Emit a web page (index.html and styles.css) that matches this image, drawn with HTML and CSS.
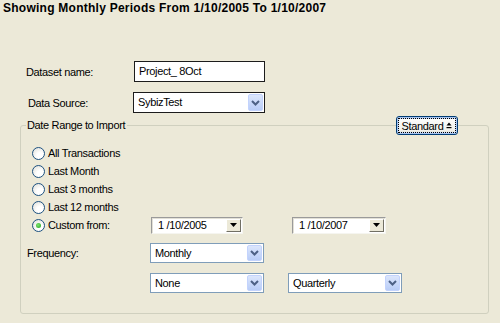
FILE: index.html
```html
<!DOCTYPE html>
<html>
<head>
<meta charset="utf-8">
<link rel="stylesheet" href="styles.css">
</head>
<body>
<div class="title">Showing Monthly Periods From 1/10/2005 To 1/10/2007</div>

<div class="row row-name">
  <span class="lbl lbl-name">Dataset name:</span>
  <div class="textbox">Project_ 8Oct</div>
</div>
<div class="row row-source">
  <span class="lbl lbl-source">Data Source:</span>
  <div class="combo combo-dark combo-source"><span class="combo-text">SybizTest</span><span class="xp-btn"><svg width="9" height="6" viewBox="0 0 9 6"><path d="M1 1 L4.5 4.5 L8 1" fill="none" stroke="#4d6185" stroke-width="2"/></svg></span></div>
</div>

<div class="group">
  <span class="group-label">Date Range to Import</span>
  <button class="std-btn"><span class="focus">Standard<svg width="6" height="7" viewBox="0 0 6 7"><path d="M3 0.5 L5.5 3.5 L0.5 3.5 Z" fill="#000"/><rect x="0.5" y="5" width="5" height="1.2" fill="#000"/></svg></span></button>

  <div class="radio-row"><span class="radio"></span><span class="rtext">All Transactions</span></div>
  <div class="radio-row"><span class="radio"></span><span class="rtext">Last Month</span></div>
  <div class="radio-row"><span class="radio"></span><span class="rtext">Last 3 months</span></div>
  <div class="radio-row"><span class="radio"></span><span class="rtext">Last 12 months</span></div>
  <div class="radio-row custom-row">
    <div class="custom-lead"><span class="radio checked"></span><span class="rtext">Custom from:</span></div>
    <div class="datepick date-from"><span class="date-text">1 /10/2005</span><span class="cls-btn"><svg width="7" height="4" viewBox="0 0 7 4"><path d="M0 0 L7 0 L3.5 4 Z" fill="#000"/></svg></span></div>
    <div class="datepick date-to"><span class="date-text">1 /10/2007</span><span class="cls-btn"><svg width="7" height="4" viewBox="0 0 7 4"><path d="M0 0 L7 0 L3.5 4 Z" fill="#000"/></svg></span></div>
  </div>

  <div class="freq-row">
    <span class="lbl lbl-freq">Frequency:</span>
    <div class="combo"><span class="combo-text">Monthly</span><span class="xp-btn"><svg width="9" height="6" viewBox="0 0 9 6"><path d="M1 1 L4.5 4.5 L8 1" fill="none" stroke="#4d6185" stroke-width="2"/></svg></span></div>
  </div>
  <div class="freq-row second">
    <div class="combo"><span class="combo-text">None</span><span class="xp-btn"><svg width="9" height="6" viewBox="0 0 9 6"><path d="M1 1 L4.5 4.5 L8 1" fill="none" stroke="#4d6185" stroke-width="2"/></svg></span></div>
    <div class="combo combo-q"><span class="combo-text">Quarterly</span><span class="xp-btn"><svg width="9" height="6" viewBox="0 0 9 6"><path d="M1 1 L4.5 4.5 L8 1" fill="none" stroke="#4d6185" stroke-width="2"/></svg></span></div>
  </div>
</div>
</body>
</html>
```

FILE: styles.css
```css
html, body {
  margin: 0;
  padding: 0;
}
body {
  background: #ece9d8;
  width: 500px;
  height: 323px;
  overflow: hidden;
  font-family: "Liberation Sans", Arial, sans-serif;
  font-size: 11px;
  letter-spacing: -0.35px;
  color: #000;
}
.title {
  font-weight: bold;
  font-size: 12px;
  letter-spacing: 0.25px;
  line-height: 13px;
  padding: 2px 0 0 3px;
  height: 13px;
}
.row {
  display: flex;
  align-items: center;
}
.row-name {
  margin-top: 46px;
  height: 21px;
}
.row-source {
  margin-top: 10px;
  height: 21px;
}
.lbl-name {
  margin-left: 26px;
  width: 108px;
}
.lbl-source {
  margin-left: 28px;
  width: 105px;
}
.textbox {
  box-sizing: border-box;
  width: 131px;
  height: 21px;
  border: 1px solid #1c1c1c;
  background: #fff;
  padding-left: 4px;
  line-height: 19px;
}
.combo {
  box-sizing: border-box;
  width: 114px;
  height: 20px;
  border: 1px solid #7f9db9;
  background: #fff;
  display: flex;
  align-items: stretch;
  padding: 1px;
}
.combo-dark {
  border-color: #1c1c1c;
}
.combo-source {
  width: 132px;
  height: 21px;
}
.combo-text {
  flex: 1;
  padding-left: 3px;
  line-height: 16px;
}
.combo-source .combo-text {
  line-height: 17px;
}
.xp-btn {
  width: 15px;
  border-radius: 2px;
  background: linear-gradient(#dce6fc, #b9cdf7);
  border: 1px solid #c3d3fd;
  box-sizing: border-box;
  display: flex;
  align-items: center;
  justify-content: center;
}
.group {
  position: relative;
  box-sizing: border-box;
  margin: 12px 0 0 20px;
  width: 469px;
  height: 189px;
  border: 1px solid #d0d0bf;
  border-radius: 3px;
  padding-top: 18px;
}
.group-label {
  position: absolute;
  top: -8px;
  left: 5px;
  background: #ece9d8;
  padding: 0 2px 0 1px;
  line-height: 14px;
}
.std-btn {
  position: absolute;
  top: -10px;
  left: 375px;
  box-sizing: border-box;
  width: 62px;
  height: 19px;
  padding: 1px;
  border: 1px solid #003c74;
  border-radius: 3px;
  background: linear-gradient(#ffffff, #f0f0ea 80%, #d6d0c5);
  box-shadow: inset 0 0 0 1px #a8c4f0, inset 0 0 0 2px #cee0fb;
  font: inherit;
  letter-spacing: inherit;
  color: #000;
  display: flex;
  align-items: stretch;
}
.focus {
  flex: 1;
  border: 1px dotted #000;
  display: flex;
  align-items: center;
  justify-content: center;
  gap: 3px;
  line-height: 12px;
}
.radio-row {
  display: flex;
  align-items: center;
  height: 18px;
  margin-left: 11px;
}
.radio {
  box-sizing: border-box;
  width: 13px;
  height: 13px;
  border: 1px solid #1c5180;
  border-radius: 50%;
  background: radial-gradient(circle at 65% 70%, #ffffff 30%, #dcdcd5 100%);
  margin-right: 3px;
  position: relative;
  flex: none;
}
.radio.checked::after {
  content: "";
  position: absolute;
  left: 3px;
  top: 3px;
  width: 5px;
  height: 5px;
  border-radius: 50%;
  background: radial-gradient(circle at 40% 40%, #7de56d, #21a121);
}
.custom-lead {
  display: flex;
  align-items: center;
  width: 119px;
}
.datepick {
  box-sizing: border-box;
  height: 17px;
  width: 92px;
  display: flex;
  align-items: stretch;
  background: #fff;
  border-top: 1px solid #9a9a9a;
  border-left: 1px solid #9a9a9a;
  border-right: 1px solid #f5f5f0;
  border-bottom: 1px solid #f5f5f0;
  box-shadow: inset 1px 1px 0 #e2e0d6;
  padding: 1px;
}
.date-to {
  margin-left: 49px;
  width: 94px;
}
.date-text {
  flex: 1;
  padding-left: 5px;
  line-height: 13px;
}
.cls-btn {
  width: 15px;
  box-sizing: border-box;
  background: #ece9d8;
  border-top: 1px solid #fff;
  border-left: 1px solid #fff;
  border-right: 1px solid #716f64;
  border-bottom: 1px solid #716f64;
  display: flex;
  align-items: center;
  justify-content: center;
}
.freq-row {
  display: flex;
  align-items: center;
  margin-top: 9px;
  height: 20px;
}
.freq-row.second {
  margin-top: 10px;
  margin-left: 129px;
}
.lbl-freq {
  margin-left: 6px;
  width: 123px;
}
.combo-q {
  margin-left: 24px;
}
```
